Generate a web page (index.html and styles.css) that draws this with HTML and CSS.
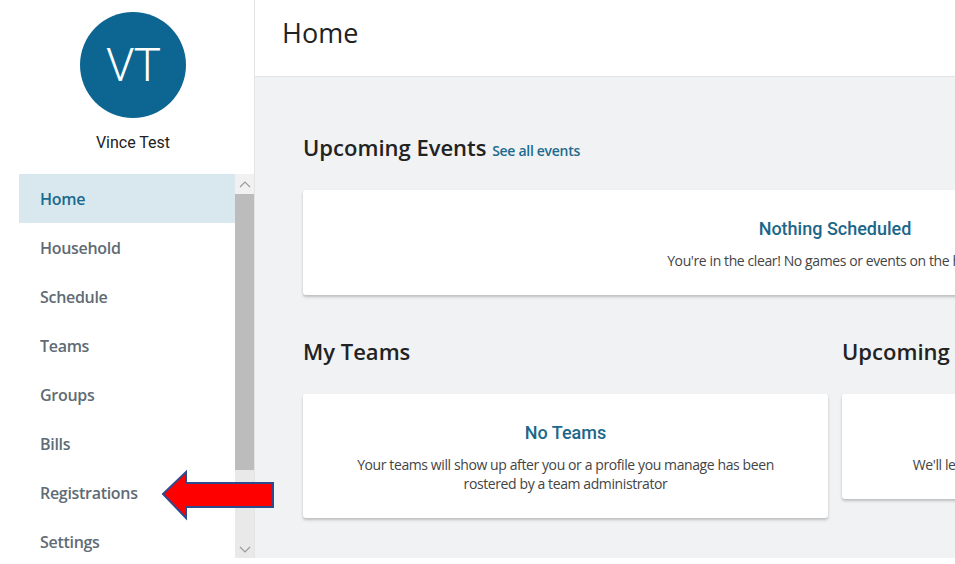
FILE: index.html
```html
<!DOCTYPE html>
<html lang="en">
<head>
  <meta charset="UTF-8" />
  <meta name="viewport" content="width=device-width, initial-scale=1.0"/>
  <title>Home</title>
  <link rel="stylesheet" href="styles.css">
</head>
<body>

  <div class="app">

    <aside class="sidebar">
      <div class="profile">
        <div class="avatar">VT</div>
        <div class="name">Vince Test</div>
      </div>

      <div class="nav-wrap">
        <ul class="nav">
          <li class="active">Home</li>
          <li>Household</li>
          <li>Schedule</li>
          <li>Teams</li>
          <li>Groups</li>
          <li>Bills</li>
          <li>Registrations</li>
          <li>Settings</li>
        </ul>
        <div class="scrollbar">
          <div class="sb-btn up">
            <svg width="12" height="8" viewBox="0 0 12 8"><path d="M1 7 L6 2 L11 7" fill="none" stroke="#9a9a9a" stroke-width="1.2"/></svg>
          </div>
          <div class="sb-thumb"></div>
          <div class="sb-track"></div>
          <div class="sb-btn down">
            <svg width="12" height="8" viewBox="0 0 12 8"><path d="M1 1 L6 6 L11 1" fill="none" stroke="#9a9a9a" stroke-width="1.2"/></svg>
          </div>
        </div>
      </div>
    </aside>

    <!-- callout drawn on top of the screenshot -->
    <svg class="callout" width="118" height="54" viewBox="0 0 118 54">
      <polygon points="3,26 26,4 26,15 113,15 113,39 26,39 26,50" fill="#ff0000" stroke="#2f4a8c" stroke-width="2" stroke-linejoin="miter"/>
    </svg>

    <main class="main">
      <header class="page-header">
        <h1>Home</h1>
      </header>

      <div class="content">
        <h2 class="section-title first">Upcoming Events <a href="#" class="see-all">See all events</a></h2>
        <div class="card">
          <h3>Nothing Scheduled</h3>
          <p>You're in the clear! No games or events on the horizon.</p>
        </div>

        <div class="columns">
          <div>
            <h2 class="section-title">My Teams</h2>
            <div class="card">
              <h3>No Teams</h3>
              <p>Your teams will show up after you or a profile you manage has been rostered by a team administrator</p>
            </div>
          </div>
          <div>
            <h2 class="section-title">Upcoming Registrations</h2>
            <div class="card">
              <h3>No Registrations</h3>
              <p>We'll let you know when there are registrations open near you.</p>
            </div>
          </div>
        </div>
      </div>
    </main>

  </div>

</body>
</html>
```

FILE: styles.css
```css
:root {
  --primary: #0c6691;
  --title: #1c6788;
  --bg: #f0f2f4;
  --text: #222;
  --muted: #5f6b75;
  --card: #ffffff;
  --border: #e2e4e6;
}

* { box-sizing: border-box; }

body {
  margin: 0;
  background: #fff;
  font-family: 'Open Sans', sans-serif;
  color: var(--text);
  overflow: hidden;
}

.app {
  position: relative;
  display: flex;
  height: 558px;
  width: 1420px;
}

.sidebar {
  width: 255px;
  flex-shrink: 0;
  background: #fff;
  border-right: 1px solid var(--border);
  display: flex;
  flex-direction: column;
}

.profile {
  padding: 12px 0 22px 12px;
  display: flex;
  flex-direction: column;
  align-items: center;
}

.avatar {
  width: 106px;
  height: 106px;
  border-radius: 50%;
  background: var(--primary);
  color: #fff;
  font-family: Roboto, sans-serif;
  font-weight: 300;
  font-size: 46px;
  display: flex;
  align-items: center;
  justify-content: center;
  letter-spacing: -1px;
}

.name {
  margin-top: 15px;
  font-family: Roboto, sans-serif;
  font-size: 16px;
  line-height: 20px;
  color: #222;
}

.nav-wrap {
  display: flex;
  flex: 1;
  margin-left: 19px;
  margin-top: -1px;
  overflow: hidden;
}

.nav {
  list-style: none;
  margin: 0;
  padding: 0;
  flex: 1;
}

.nav li {
  height: 49px;
  line-height: 50px;
  padding-left: 21px;
  font-size: 16px;
  font-weight: 600;
  letter-spacing: -0.3px;
  color: var(--muted);
}

.nav li.active {
  background: #d9e7ee;
  color: #1a6a8e;
}

.scrollbar {
  width: 19px;
  display: flex;
  flex-direction: column;
  background: #e9e9e9;
}

.sb-btn {
  display: flex;
  align-items: center;
  justify-content: center;
  background: #f1f1f1;
}

.sb-btn.up { height: 20px; }
.sb-btn.down { height: 16px; background: #e9e9e9; }

.sb-thumb {
  height: 276px;
  background: #bcbcbc;
}

.sb-track { flex: 1; }

.callout {
  position: absolute;
  left: 160px;
  top: 468px;
}

.main {
  flex: 1;
  background: var(--bg);
}

.page-header {
  height: 77px;
  background: #fff;
  border-bottom: 1px solid var(--border);
  padding-left: 27px;
}

.page-header h1 {
  margin: 0;
  font-size: 27px;
  font-weight: 400;
  line-height: 65px;
  color: #222;
}

.content {
  padding: 0 0 0 48px;
  width: 1112px;
}

.section-title {
  margin: 41px 0 28px;
  font-size: 22px;
  font-weight: 600;
  line-height: 30px;
  color: #222;
}

.section-title.first { margin-top: 55px; }

.see-all {
  font-size: 14px;
  font-weight: 600;
  line-height: 1;
  letter-spacing: -0.3px;
  color: #1d6b8e;
  text-decoration: none;
}

.card {
  background: var(--card);
  border-radius: 3px;
  box-shadow: 0 2px 3px rgba(0,0,0,0.22);
  padding: 27px 40px 25px;
  text-align: center;
}

.card h3 {
  margin: 0 0 10px;
  font-family: Roboto, sans-serif;
  font-weight: 500;
  font-size: 18px;
  line-height: 24px;
  color: var(--title);
}

.card p {
  margin: 0;
  font-size: 14px;
  line-height: 19px;
  letter-spacing: -0.4px;
  color: #444;
}

.columns {
  display: grid;
  grid-template-columns: 525px 525px;
  gap: 14px;
  align-items: start;
}
```
